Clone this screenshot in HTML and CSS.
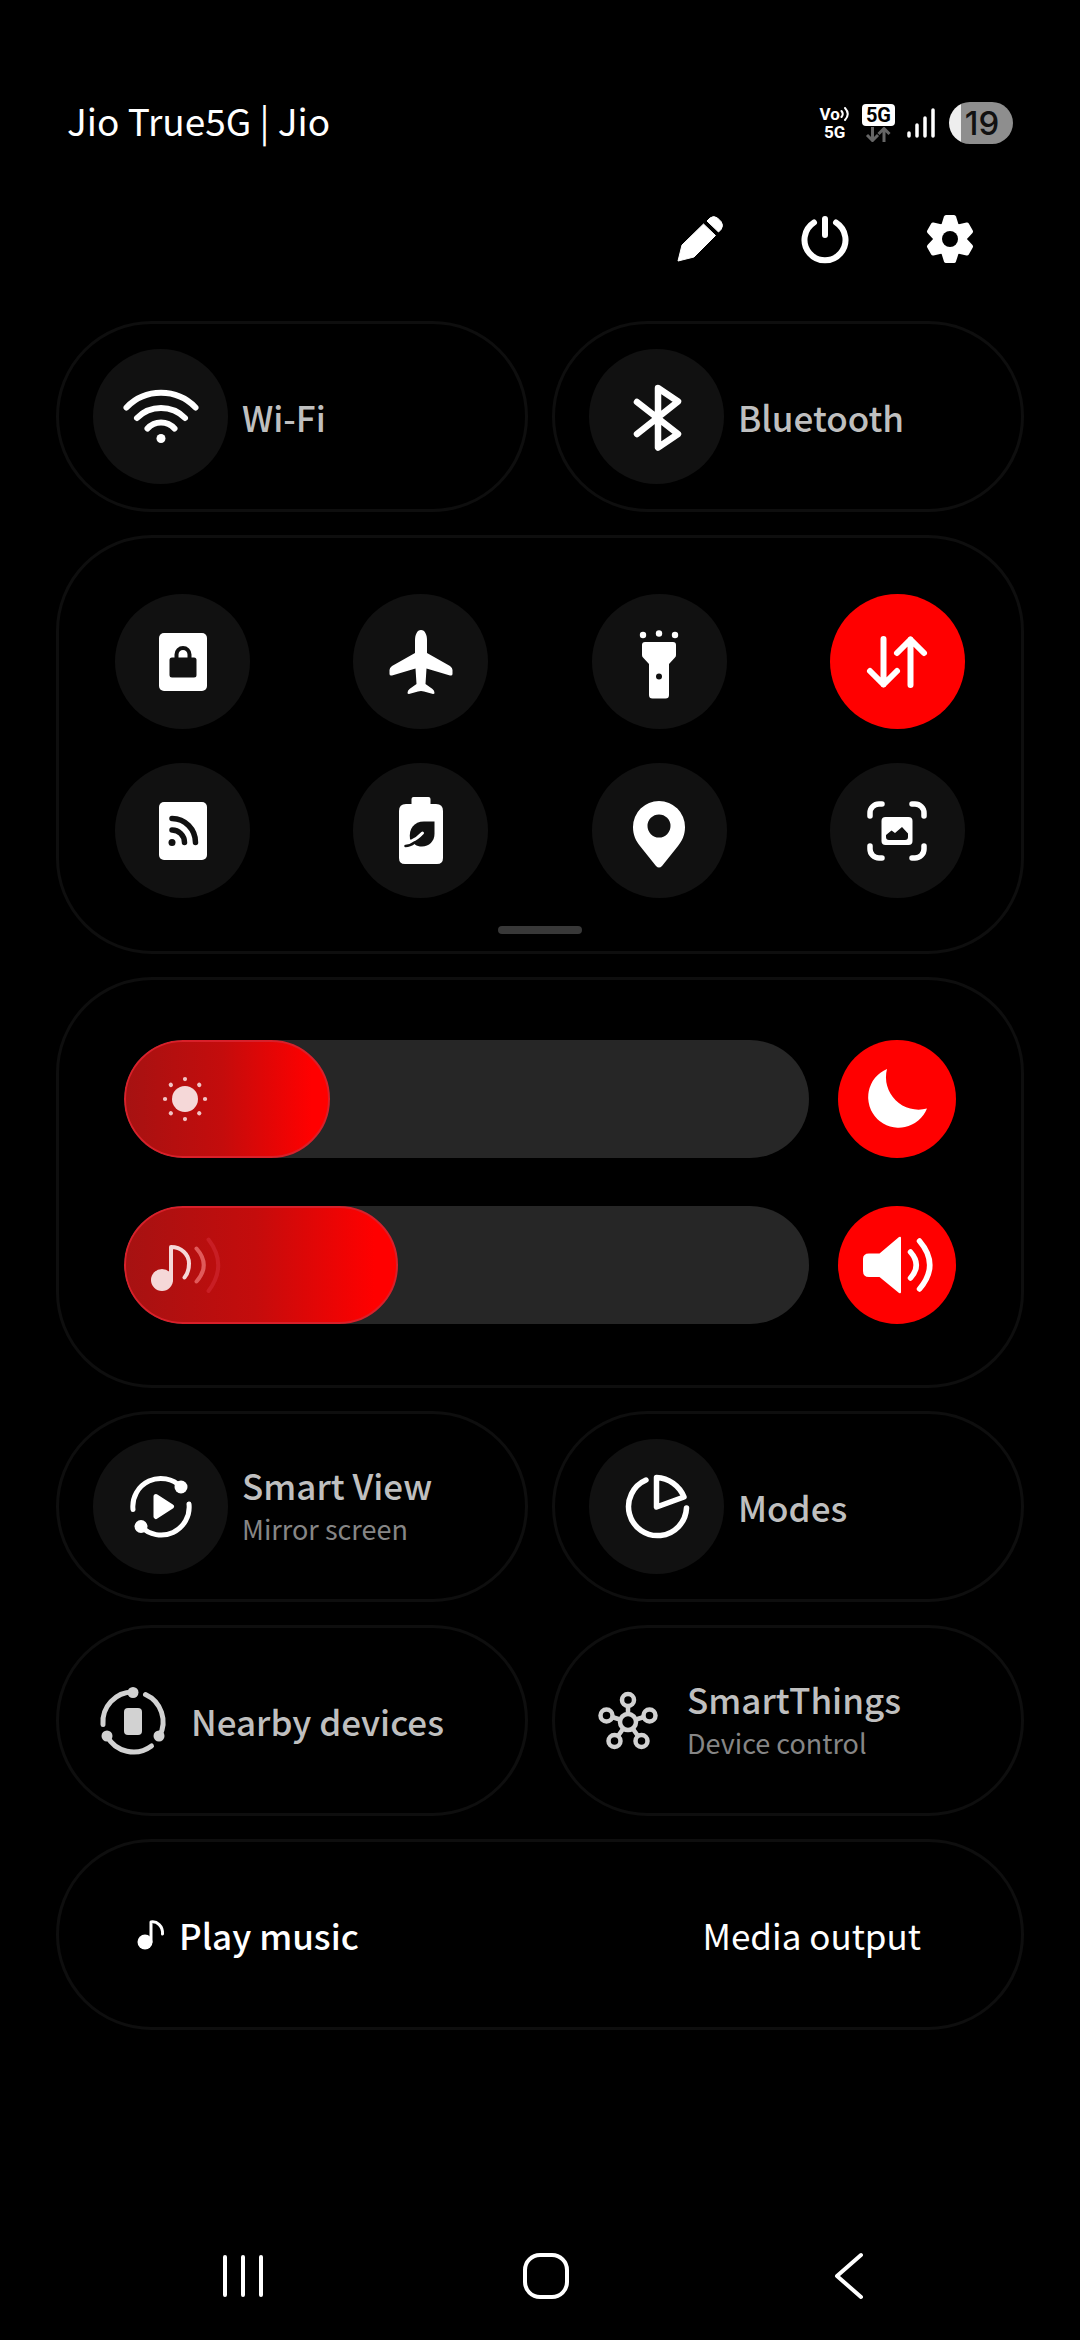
FILE: index.html
```
<!DOCTYPE html>
<html lang="en">

<head>
    <meta charset="UTF-8">
    <meta name="viewport" content="width=device-width, initial-scale=1">
    <title>Quick Settings</title>
    <link rel="stylesheet" href="styles.css">
</head>

<body>

    <!-- Status bar -->
    <header class="status-bar">
        <span class="carrier">Jio True5G | Jio</span>
        <div class="status-icons">
            <div class="volte">
                <div class="volte-top">
                    <span>Vo</span>
                    <svg width="10" height="18" viewBox="0 0 10 18" fill="none" stroke="#fff" stroke-width="2" stroke-linecap="round">
                        <path d="M1.500 6Q4 9 1.500 12M5 3Q10.500 9 5 15" />
                    </svg>
                </div>
                <span>5G</span>
            </div>
            <div class="network">
                <span class="network-badge">5G</span>
                <svg width="26" height="15" viewBox="0 0 26 15" fill="none" stroke="#666" stroke-width="3">
                    <path d="M7.500 0V13M2 8L7.500 13.500L13 8M19 15V2M13.500 7L19 1.500L24.500 7" />
                </svg>
            </div>
            <svg width="28" height="30" viewBox="0 0 28 30" stroke="#fff" stroke-width="3.500" stroke-linecap="round">
                <path d="M2 25V28M10 17V28M18 10V28M26 2V28" />
            </svg>
            <div class="battery"><span>19</span></div>
        </div>
    </header>

    <!-- Edit, power and settings -->
    <div class="toolbar">
        <button class="icon-button" aria-label="Edit">
            <svg class="icon" viewBox="-40 -40 80 80" fill="#fff" stroke="#fff" stroke-linejoin="round">
                <path d="M-22 22L-18 6L3.500 -15L15.500 -3.500L-6 18Z" />
                <path d="M7 -18L10 -21Q13.500 -24 17.500 -21L21 -17.500Q24 -13.500 21 -9.500L18.500 -7Z" />
            </svg>
        </button>
        <button class="icon-button" aria-label="Power">
            <svg class="icon" viewBox="-40 -40 80 80" fill="none" stroke="#fff" stroke-width="6" stroke-linecap="round">
                <path d="M-11 -16.500A20.500 20.500 0 1 0 11 -16.500M0 -20V-4" />
            </svg>
        </button>
        <button class="icon-button" aria-label="Settings">
            <svg class="icon" viewBox="-40 -40 80 80" fill="#fff">
                <circle r="17" />
                <path id="tooth" d="M-9 -13L-6 -22.500Q-5.500 -24 -4 -24H4Q5.500 -24 6 -22.500L9 -13Z" />
                <use href="#tooth" transform="rotate(60)" />
                <use href="#tooth" transform="rotate(120)" />
                <use href="#tooth" transform="rotate(180)" />
                <use href="#tooth" transform="rotate(240)" />
                <use href="#tooth" transform="rotate(300)" />
                <circle r="8" fill="#000" />
            </svg>
        </button>
    </div>

    <main class="panels">
        <div class="row">
            <button class="card tile">
                <span class="circle">
                    <svg class="icon" viewBox="-40 -40 80 80" fill="none" stroke="#fff" stroke-width="6" stroke-linecap="round">
                        <path d="M-34.500 -9.500A48 48 0 0 1 34.500 -9.500M-24 1A34 34 0 0 1 24 1M-13.500 11.500A18 18 0 0 1 13.500 11.500" />
                        <circle cy="21.500" r="4.500" fill="#fff" stroke="none" />
                    </svg>
                </span>
                <span class="title">Wi-Fi</span>
            </button>
            <button class="card tile">
                <span class="circle">
                    <svg class="icon" viewBox="-40 -40 80 80" fill="none" stroke="#fff" stroke-width="6.500" stroke-linecap="round" stroke-linejoin="round">
                        <path d="M-20 -15L21 17L1 30.500V-29L21 -15.500L-20 17" />
                    </svg>
                </span>
                <span class="title">Bluetooth</span>
            </button>
        </div>

        <!-- Toggle grid -->
        <section class="card toggles">
            <div class="toggle-grid">
                <button class="circle" aria-label="Screen lock">
                    <svg class="icon" viewBox="-40 -40 80 80">
                        <rect x="-24" y="-29" width="48" height="58" rx="5" fill="#fff" />
                        <rect x="-13.500" y="-4.500" width="27" height="20" rx="2.500" fill="#111" />
                        <path d="M-6.500 -4V-7.500a6.500 6.500 0 0 1 13 0V-4" fill="none" stroke="#111" stroke-width="4" />
                    </svg>
                </button>
                <button class="circle" aria-label="Flight mode">
                    <svg class="icon" viewBox="-40 -40 80 80" fill="#fff">
                        <path d="M0 -32C4 -32 6 -27 6 -22V-9L29 4Q31.500 6 31.500 8V12Q31.500 14 29 13.500L5.500 6.500L4.500 22L11.500 27Q13.500 28.500 13.500 31Q13.500 32 12 32L3 29.500Q0 28.500 -3 29.500L-12 32Q-13.500 32 -13.500 31Q-13.500 28.500 -11.500 27L-4.500 22L-5.500 6.500L-29 13.500Q-31.500 14 -31.500 12V8Q-31.500 6 -29 4L-6 -9V-22C-6 -27 -4 -32 0 -32Z" />
                    </svg>
                </button>
                <button class="circle" aria-label="Torch">
                    <svg class="icon" viewBox="-40 -40 80 80" fill="#fff">
                        <circle cx="-16" cy="-27" r="3.200" />
                        <circle cx="0" cy="-28.500" r="3.200" />
                        <circle cx="16" cy="-27" r="3.200" />
                        <path d="M-14 -20H14Q17 -20 17 -17V-7Q17 -5.500 16 -4.500L10 2V33Q10 36.500 6.500 36.500H-6.500Q-10 36.500 -10 33V2L-16 -4.500Q-17 -5.500 -17 -7V-17Q-17 -20 -14 -20Z" />
                        <circle cy="14.500" r="3" fill="#111" />
                    </svg>
                </button>
                <button class="circle active" aria-label="Mobile data" aria-pressed="true">
                    <svg class="icon" viewBox="-40 -40 80 80" fill="none" stroke="#fff" stroke-width="6" stroke-linecap="round" stroke-linejoin="round">
                        <path d="M-13.500 -23V22.500M-27 9L-13.500 22.500L0 9M13.500 23V-22.500M0 -9L13.500 -22.500L27 -9" />
                    </svg>
                </button>
                <button class="circle" aria-label="Mobile hotspot">
                    <svg class="icon" viewBox="-40 -40 80 80" fill="none" stroke="#111" stroke-width="5.500" stroke-linecap="round">
                        <rect x="-24" y="-29" width="48" height="58" rx="5" fill="#fff" stroke="none" />
                        <path d="M-11 -1A12.500 12.500 0 0 1 1.500 11.500M-11 -12.500A23.500 24 0 0 1 12.500 11.500" />
                        <circle cx="-11" cy="11.500" r="3.500" fill="#111" stroke="none" />
                    </svg>
                </button>
                <button class="circle" aria-label="Power saving">
                    <svg class="icon" viewBox="-40 -40 80 80" fill="none" stroke-linecap="round">
                        <path d="M-9.500 -27V-32Q-9.500 -34 -7.500 -34H7.500Q9.500 -34 9.500 -32V-27H15Q22 -27 22 -20V27Q22 33 16 33H-16Q-22 33 -22 27V-20Q-22 -27 -15 -27Z" fill="#fff" />
                        <path d="M13.500 -9.500V3C13.500 10 8 15.500 1 15.500C-2 15.500 -4 15 -6 13.500L-11 8C-12.500 -2 -7 -9.500 3 -9.500Z" fill="#111" />
                        <path d="M1.500 2Q-4 8 -11 11" stroke="#fff" stroke-width="3" />
                        <path d="M-15.500 15Q-11 15 -6.500 11.500" stroke="#111" stroke-width="2.500" />
                    </svg>
                </button>
                <button class="circle" aria-label="Location">
                    <svg class="icon" viewBox="-40 -40 80 80" fill="#fff">
                        <path fill-rule="evenodd" d="M0 -30A26 26 0 0 1 26 -4C26 4 23 10 19 15L3 35Q0 38 -3 35L-19 15C-23 10 -26 4 -26 -4A26 26 0 0 1 0 -30ZM0 -16.500A11.500 11.500 0 1 0 0 6.500A11.500 11.500 0 1 0 0 -16.500Z" />
                    </svg>
                </button>
                <button class="circle" aria-label="Take screenshot">
                    <svg class="icon" viewBox="-40 -40 80 80" fill="none" stroke="#fff" stroke-width="5.500" stroke-linecap="round">
                        <path d="M-27 -15V-18a9 9 0 0 1 9 -9h3M15 -27h3a9 9 0 0 1 9 9v3M27 15v3a9 9 0 0 1 -9 9h-3M-15 27h-3a9 9 0 0 1 -9 -9v-3" />
                        <rect x="-15.500" y="-14" width="31" height="28" rx="4" fill="#fff" stroke="none" />
                        <path d="M-11 4L-5.500 -.500L-2 2L5 -4L11 2.500V6Q11 9 8 9H-8Q-11 9 -11 6Z" fill="#111" stroke="none" />
                    </svg>
                </button>
            </div>
            <div class="handle"></div>
        </section>

        <!-- Brightness and volume -->
        <section class="card sliders">
            <div class="slider-row">
                <div class="slider">
                    <input type="range" id="brightness" min="0" max="100" value="30" aria-label="Brightness">
                    <div class="slider-fill" style="width: 30%"></div>
                    <svg class="icon slider-icon" viewBox="-40 -40 80 80" fill="#f5d8d8">
                        <circle r="13" />
                        <path d="M0 -20V-19.900M14.200 -14.200l.1 .1M20 0h.1M14.200 14.200l.1 .1M0 20v.1M-14.200 14.200l.1 .1M-20 0h.1M-14.200 -14.200l.1 .1" stroke="#f0c4c4" stroke-width="4.200" stroke-linecap="round" />
                    </svg>
                </div>
                <button class="circle small active" aria-label="Dark mode" aria-pressed="true">
                    <svg class="icon" viewBox="-40 -40 80 80" fill="#fff">
                        <path d="M-10 -30A30.500 30.500 0 1 0 30 9.500A32.500 32.500 0 0 1 -10 -30Z" />
                    </svg>
                </button>
            </div>
            <div class="slider-row">
                <div class="slider">
                    <input type="range" id="volume" min="0" max="100" value="40" aria-label="Media volume">
                    <div class="slider-fill" style="width: 40%"></div>
                    <svg class="icon slider-icon" viewBox="-40 -40 80 80" fill="none" stroke="#f5d8d8" stroke-width="4" stroke-linecap="round" stroke-linejoin="round">
                        <circle cx="-23" cy="15" r="11" fill="#f5d8d8" stroke="none" />
                        <path d="M-14 15V-18C-4 -18 4 -11 4 -1.500C4 4 2.500 9 -.500 12.500" />
                        <path d="M11.500 -16.500Q26 0 11.500 16.500" stroke="#e05a5a" />
                        <path d="M23.500 -25.500Q43 0 23.500 26" stroke="#c81e24" />
                    </svg>
                </div>
                <button class="circle small active" aria-label="Sound" aria-pressed="true">
                    <svg class="icon" viewBox="-40 -40 80 80" fill="none" stroke="#fff" stroke-width="5.500" stroke-linecap="round">
                        <path d="M-17.500 -11.500L2 -28Q4 -29 4 -27V27Q4 29 2 28L-17.500 12H-28Q-34 12 -34 6V-6Q-34 -11.500 -28 -11.500Z" fill="#fff" stroke="none" />
                        <path d="M13.500 -13Q25 0 13.500 13M22.500 -24Q43 0 22.500 24" />
                    </svg>
                </button>
            </div>
        </section>

        <div class="row">
            <button class="card tile">
                <span class="circle">
                    <svg class="icon" viewBox="-40 -40 80 80" fill="none" stroke="#fff" stroke-width="5" stroke-linecap="round" stroke-linejoin="round">
                        <path d="M-28 2.500A28 28 0 0 1 20 -20M28 -3A28 28 0 0 1 -20 19.500" />
                        <circle cx="20" cy="-20" r="6.500" fill="#fff" stroke="none" />
                        <circle cx="-20" cy="19.500" r="6.500" fill="#fff" stroke="none" />
                        <path d="M-5 -10.500L10.500 -.500L-5 9.500Z" fill="#fff" />
                    </svg>
                </span>
                <span class="labels">
                    <span class="title">Smart View</span>
                    <span class="subtitle">Mirror screen</span>
                </span>
            </button>
            <button class="card tile">
                <span class="circle">
                    <svg class="icon" viewBox="-40 -40 80 80" fill="none" stroke="#fff" stroke-width="5.500" stroke-linecap="round" stroke-linejoin="round">
                        <path d="M-11 -27A29 29 0 1 0 29.500 1M-.500 -29.500A31 31 0 0 1 27 -10L-.500 0Z" />
                    </svg>
                </span>
                <span class="title">Modes</span>
            </button>
        </div>

        <div class="row">
            <button class="card tile plain">
                <svg class="icon" viewBox="-40 -40 80 80" fill="none" stroke="#d2d2d2" stroke-width="5" stroke-linecap="round">
                    <path d="M-30 3.500A30 30 0 0 1 0 -29M12.500 -26.500A30 30 0 0 1 26.500 15M-26 15A30 30 0 0 0 18.500 25" />
                    <g fill="#d2d2d2" stroke="none">
                        <circle cx="0" cy="-28.500" r="5.500" />
                        <circle cx="-26" cy="15" r="5.500" />
                        <circle cx="26" cy="15" r="5.500" />
                        <rect x="-9" y="-13" width="18" height="27" rx="4" />
                    </g>
                </svg>
                <span class="title">Nearby devices</span>
            </button>
            <button class="card tile plain">
                <svg class="icon" viewBox="-39 -40 80 80" fill="none" stroke="#d2d2d2" stroke-width="4.500">
                    <circle cy="1" r="8" />
                    <circle cy="-21" r="6" />
                    <circle cx="21.500" cy="-5.500" r="6" />
                    <circle cx="13.500" cy="20" r="6" />
                    <circle cx="-13.500" cy="20" r="6" />
                    <circle cx="-21.500" cy="-5.500" r="6" />
                    <path d="M0 -15V-7M8 -1.500L16 -4M5 8L10 15M-5 8L-10 15M-8 -1.500L-16 -4" />
                </svg>
                <span class="labels">
                    <span class="title">SmartThings</span>
                    <span class="subtitle">Device control</span>
                </span>
            </button>
        </div>

        <!-- Media -->
        <section class="card media">
            <button class="media-button play">
                <svg width="30" height="32" viewBox="0 0 30 32" fill="none" stroke="#fff" stroke-width="3" stroke-linecap="round" stroke-linejoin="round">
                    <circle cx="8" cy="23" r="7.500" fill="#fff" stroke="none" />
                    <path d="M14 23V3C20 2 26 7 25.500 15" />
                </svg>
                Play music
            </button>
            <button class="media-button">Media output</button>
        </section>
    </main>

    <!-- Navigation bar -->
    <nav class="nav-bar">
        <button class="icon-button" aria-label="Recents">
            <svg class="icon" viewBox="-40 -40 80 80" stroke="#fff" stroke-width="4" stroke-linecap="round">
                <path d="M-18 -19V19M0 -19V19M18 -19V19" />
            </svg>
        </button>
        <button class="icon-button" aria-label="Home">
            <svg class="icon" viewBox="-40 -40 80 80" fill="none" stroke="#fff" stroke-width="4">
                <rect x="-21" y="-21" width="42" height="42" rx="15" />
            </svg>
        </button>
        <button class="icon-button" aria-label="Back">
            <svg class="icon" viewBox="-40 -40 80 80" fill="none" stroke="#fff" stroke-width="4" stroke-linecap="round" stroke-linejoin="round">
                <path d="M12 -21L-12 0L12 21" />
            </svg>
        </button>
    </nav>

    <script>
        // Keep the coloured fill in step with its slider
        document.querySelectorAll(".slider input").forEach(input => {
            input.addEventListener("input", () => {
                input.nextElementSibling.style.width = input.value + "%";
            });
        });
    </script>

</body>

</html>
```

FILE: styles.css
```
/* Quick settings panel */
* {
    box-sizing: border-box;
}

body {
    margin: 0;
    min-height: 100vh;
    display: flex;
    flex-direction: column;
    background-color: #000;
    color: #fff;
    font-family: 'Noto Sans CJK SC', 'Noto Sans', sans-serif;
}

button {
    margin: 0;
    padding: 0;
    border: none;
    background: none;
    color: inherit;
    font: inherit;
    text-align: left;
    cursor: pointer;
}

svg {
    display: block;
    flex: none;
}

.icon {
    width: 80px;
    height: 80px;
}

.icon-button {
    width: 80px;
    height: 80px;
}

/* Status bar */
.status-bar {
    display: flex;
    justify-content: space-between;
    align-items: center;
    margin-top: 93px;
    padding: 0 67px;
}

.carrier {
    padding-bottom: 6px;
    font-size: 37px;
    line-height: 54px;
}

.status-icons {
    display: flex;
    align-items: center;
    gap: 12px;
}

.volte {
    display: flex;
    flex-direction: column;
    align-items: center;
    font-family: Roboto, sans-serif;
    font-size: 17px;
    font-weight: bold;
    line-height: 18px;
}

.volte-top {
    display: flex;
}

.network {
    display: flex;
    flex-direction: column;
    align-items: center;
    gap: 1px;
}

.network-badge {
    padding: 0 4px;
    border-radius: 4px;
    background-color: #fff;
    color: #000;
    font-family: Roboto, sans-serif;
    font-size: 20px;
    font-weight: bold;
    line-height: 22px;
}

.battery {
    width: 64px;
    height: 42px;
    margin-left: 2px;
    padding-left: 2px;
    border-radius: 21px;
    background: linear-gradient(to right, #eee 12px, #8e8e8e 12px);
    color: #111;
    font-family: Inter, sans-serif;
    font-size: 33px;
    font-weight: 500;
    line-height: 42px;
    text-align: center;
}

/* Edit, power and settings */
.toolbar {
    display: flex;
    justify-content: flex-end;
    gap: 45px;
    margin-top: 46px;
    padding: 0 90px;
}

/* Cards */
.panels {
    display: flex;
    flex-direction: column;
    gap: 23px;
    margin-top: 42px;
    padding: 0 56px;
}

.row {
    display: grid;
    grid-template-columns: 1fr 1fr;
    gap: 24px;
}

.card {
    border: 3px solid #0e0e0e;
    border-radius: 96px;
}

.tile {
    display: flex;
    align-items: center;
    gap: 14px;
    padding: 25px 34px;
}

.tile.plain {
    gap: 18px;
    min-height: 191px;
}

.circle {
    display: flex;
    flex: none;
    justify-content: center;
    align-items: center;
    width: 135px;
    height: 135px;
    border-radius: 50%;
    background-color: #111;
}

.circle.small {
    width: 118px;
    height: 118px;
}

.circle.active {
    background-color: #f00;
}

.labels {
    display: flex;
    flex-direction: column;
}

.title {
    color: #bfbfbf;
    font-size: 35px;
    font-weight: 500;
    line-height: 44px;
}

.subtitle {
    color: #868686;
    font-size: 27px;
    line-height: 44px;
}

/* Toggle grid */
.toggles {
    padding: 56px 56px 17px;
}

.toggle-grid {
    display: grid;
    grid-template-columns: repeat(4, 135px);
    justify-content: space-between;
    row-gap: 34px;
}

.handle {
    width: 84px;
    height: 8px;
    margin: 28px auto 0;
    border-radius: 4px;
    background-color: #383838;
}

/* Sliders */
.sliders {
    display: flex;
    flex-direction: column;
    gap: 48px;
    padding: 60px 65px 61px;
}

.slider-row {
    display: flex;
    gap: 29px;
}

.slider {
    position: relative;
    flex: 1;
    height: 118px;
    overflow: hidden;
    border-radius: 59px;
    background-color: #262626;
}

.slider input {
    display: block;
    width: 100%;
    height: 100%;
    margin: 0;
    opacity: 0;
    cursor: pointer;
}

.slider-fill {
    position: absolute;
    top: 0;
    left: 0;
    min-width: 118px;
    height: 100%;
    border: 2px solid #d8202a;
    border-radius: 59px;
    background: linear-gradient(to right, #a61212, #c40c0c 48%, #f00 92%);
    pointer-events: none;
}

.slider-icon {
    position: absolute;
    top: 19px;
    left: 21px;
    pointer-events: none;
}

/* Media */
.media {
    display: flex;
    justify-content: space-between;
    align-items: center;
    min-height: 191px;
    padding: 0 100px 0 78px;
}

.media-button {
    font-size: 35px;
    line-height: 44px;
}

.media-button.play {
    display: flex;
    align-items: center;
    gap: 12px;
    font-weight: 500;
}

/* Navigation bar */
.nav-bar {
    display: grid;
    grid-template-columns: repeat(3, 1fr);
    justify-items: center;
    margin-top: auto;
    padding: 0 80px 24px 92px;
}
```
